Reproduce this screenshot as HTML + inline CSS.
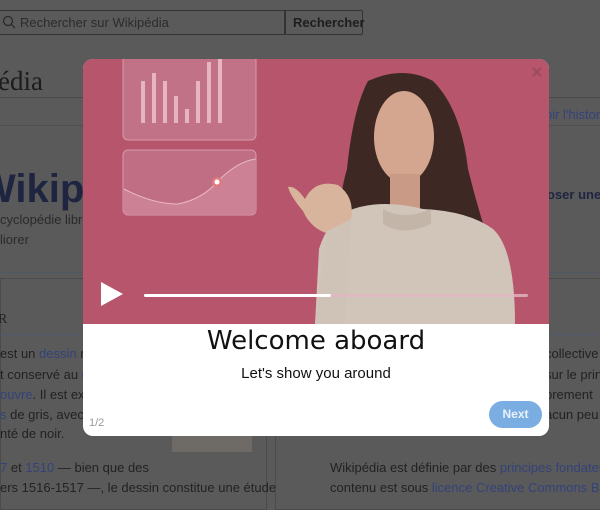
<!DOCTYPE html>
<html><head><meta charset="utf-8"><style>
body{margin:0;width:600px;height:504px;overflow:hidden;background:#5a5a5a;font-family:"Liberation Sans",sans-serif;position:relative;color:#222}
.a{position:absolute;white-space:nowrap}
.l{color:#34427a}
.t{font-size:13px}
</style></head><body>
<div class="a" style="left:-2px;top:10px;width:286px;height:23px;border:1px solid #333;border-radius:2px"></div>
<svg class="a" style="left:2px;top:15px" width="14" height="14"><circle cx="6" cy="6" r="4.5" fill="none" stroke="#2a2a2a" stroke-width="1.3"/><path d="M9.3 9.3L13 13" stroke="#2a2a2a" stroke-width="1.3"/></svg>
<div class="a t" style="left:20px;top:15px;color:#2c2c2c">Rechercher sur Wikipédia</div>
<div class="a" style="left:284px;top:10px;width:77px;height:23px;border:1px solid #333;border-radius:0 2px 2px 0"></div>
<div class="a t" style="left:293px;top:15px;font-weight:bold;color:#1e1e1e">Rechercher</div>
<div class="a" style="left:-2px;top:66px;font-family:'Liberation Serif',serif;font-size:27px;color:#1c1c1c">édia</div>
<div class="a" style="left:0;top:97px;width:600px;height:1px;background:#4a4a4a"></div>
<div class="a" style="left:0;top:125px;width:600px;height:1px;background:#4f4f4f"></div>
<div class="a" style="left:500px;top:76px;color:#33416e;font-size:14px">文A 3</div>
<div class="a t" style="left:545px;top:107px" ><span class="l">oir l'historiq</span></div>
<div class="a" style="left:-22px;top:167px;font-size:40px;font-weight:bold;color:#1f2540">Wikipé</div>
<div class="a t" style="left:0;top:212px;color:#2a2a2a">cyclopédie libre</div>
<div class="a t" style="left:0;top:232px;color:#2a2a2a">liorer</div>
<div class="a t" style="left:547px;top:187px;font-weight:bold;color:#1f2540">oser une</div>
<div class="a" style="left:0;top:272px;width:600px;height:1px;background:#4f5866"></div>
<div class="a" style="left:0;top:278px;width:265px;height:230px;border:1px solid #4b4b4b"></div>
<div class="a" style="left:275px;top:278px;width:330px;height:230px;border:1px solid #4b4b4b"></div>
<div class="a" style="left:-2px;top:312px;font-family:'Liberation Serif',serif;font-size:14px;color:#222">R</div>
<div class="a" style="left:0;top:334px;width:265px;height:1px;background:#4f5a70"></div>
<div class="a" style="left:330px;top:334px;width:270px;height:1px;background:#4f5a70"></div>
<div class="a" style="left:172px;top:420px;width:80px;height:32px;background:#6e6a66"></div>
<div class="a t" style="left:0;top:346px">est un <span class="l">dessin</span> r</div>
<div class="a t" style="left:0;top:367px">t conservé au <span class="l">d</span></div>
<div class="a t" style="left:0;top:387px"><span class="l">ouvre</span>. Il est ex</div>
<div class="a t" style="left:0;top:407px"><span class="l">s</span> de gris, avec</div>
<div class="a t" style="left:0;top:426px">nté de noir.</div>
<div class="a t" style="left:0;top:460px"><span class="l">7</span> et <span class="l">1510</span> — bien que des</div>
<div class="a t" style="left:0;top:480px">ers 1516-1517 —, le dessin constitue une étude</div>
<div class="a t" style="left:545px;top:346px">collective</div>
<div class="a t" style="left:545px;top:367px">sur le prin</div>
<div class="a t" style="left:545px;top:387px">brement</div>
<div class="a t" style="left:545px;top:407px">acun peu</div>
<div class="a t" style="left:330px;top:460px">Wikipédia est définie par des <span class="l">principes fondateur</span></div>
<div class="a t" style="left:330px;top:480px">contenu est sous <span class="l">licence Creative Commons BY-</span></div>

<div class="a" style="left:83px;top:59px;width:466px;height:377px;background:#fff;border-radius:10px;overflow:hidden">
<svg width="466" height="265" style="display:block">
<rect width="466" height="265" fill="#b6556c"/>
<rect x="40" y="-4" width="133" height="85" rx="5" fill="#c27287" stroke="#d89aa8"/>
<g fill="#e8b4c0">
<rect x="58" y="22" width="4" height="42"/><rect x="69" y="14" width="4" height="50"/><rect x="80" y="22" width="4" height="42"/><rect x="91" y="37" width="4" height="27"/><rect x="102" y="50" width="4" height="14"/><rect x="113" y="22" width="4" height="42"/><rect x="124" y="3" width="4" height="61"/><rect x="135" y="0" width="4" height="64"/></g>
<rect x="40" y="91" width="133" height="65" rx="5" fill="#c06e84" stroke="#d89aa8"/>
<path d="M41 130 Q70 145 95 145 Q120 140 135 122 Q155 102 173 100 L173 155 L41 155Z" fill="#cd8194"/>
<path d="M41 130 Q70 145 95 145 Q120 140 135 122 Q155 102 173 100" fill="none" stroke="#eab8c3"/>
<circle cx="134" cy="123" r="5" fill="#e07a80"/><circle cx="134" cy="123" r="2.5" fill="#fff"/>
<path d="M285 22 Q320 6 350 22 Q378 50 385 110 Q395 150 405 180 L385 210 L290 215 L260 200 Q252 150 264 110 Q270 50 285 22Z" fill="#3d2823"/>
<ellipse cx="321" cy="78" rx="30" ry="46" fill="#d4a690"/>
<rect x="307" y="115" width="30" height="40" fill="#c99a86"/>
<path d="M232 265 L236 190 Q245 160 270 150 Q300 140 340 150 Q385 152 410 170 Q432 190 432 265Z" fill="#d1c4b8"/>
<path d="M300 150 Q320 162 348 150 L348 165 Q320 178 300 165Z" fill="#c3b5a8"/>
<path d="M205 128 Q212 126 222 140 Q232 120 255 126 Q272 138 268 160 L246 175 Q228 170 220 152 Q208 138 205 128Z" fill="#d9b49c"/>
<path d="M244 172 L268 160 L262 265 L232 265Z" fill="#cfc2b6"/>
<path d="M18 223 L40 235 L18 247Z" fill="#fff"/>
<rect x="61" y="235" width="384" height="3" rx="1.5" fill="#e0b8c2" opacity=".8"/>
<rect x="61" y="235" width="187" height="3" rx="1.5" fill="#fff"/>
<path d="M450 9 L458 17 M458 9 L450 17" stroke="#9c4a5d" stroke-width="2"/>
</svg>
<div class="a" style="left:0;top:267px;width:466px;text-align:center;font-family:'DejaVu Sans',sans-serif;font-size:26px;color:#111">Welcome aboard</div>
<div class="a" style="left:0;top:306px;width:466px;text-align:center;font-size:15px;color:#111">Let's show you around</div>
<div class="a" style="left:6px;top:358px;font-size:11px;color:#999">1/2</div>
<div class="a" style="left:406px;top:342px;width:53px;height:27px;border-radius:14px;background:#7aaee2;color:#e9f2fb;font-size:12px;font-weight:bold;text-align:center;line-height:27px">Next</div>
</div>
</body></html>
